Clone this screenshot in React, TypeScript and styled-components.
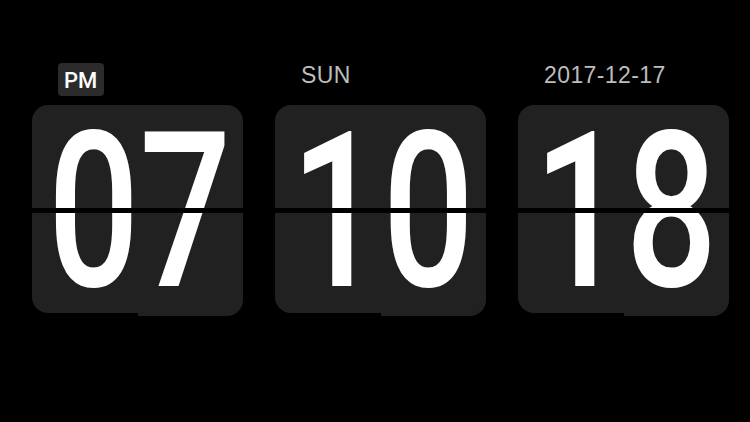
import styled, { createGlobalStyle } from 'styled-components';

const GlobalStyle = createGlobalStyle`
    html, body {
        margin: 0;
        padding: 0;
        background: #000;
    }
    body {
        font-family: "Liberation Sans", Arial, sans-serif;
    }
`;

const Screen = styled.div`
    width: 750px;
    height: 422px;
    background: #000;
    display: flex;
    flex-direction: column;
    padding: 63px 0 0 32px;
    box-sizing: border-box;
`;

const Row = styled.div`
    display: flex;
    gap: 32px;
`;

const Column = styled.div`
    width: 211px;
    display: flex;
    flex-direction: column;
    gap: 9px;
`;

const LabelRow = styled.div`
    height: 33px;
    display: flex;
    align-items: flex-start;
    padding-left: 26px;
`;

const Badge = styled.span`
    height: 33px;
    padding: 2px 7px 0 6px;
    display: flex;
    align-items: center;
    background: #2b2b2b;
    border-radius: 4px;
    color: #fff;
    font-family: Roboto, "Liberation Sans", sans-serif;
    font-size: 22px;
    font-weight: 500;
    line-height: 24px;
    box-sizing: border-box;
`;

const Label = styled.span`
    color: #bdbdbd;
    font-size: 23px;
    letter-spacing: 0.4px;
    line-height: 24px;
`;

const Card = styled.div`
    position: relative;
    height: 208px;

    /* split between the two flaps */
    &::before {
        content: '';
        position: absolute;
        left: 0;
        right: 0;
        top: 103px;
        height: 5px;
        background: #000;
        z-index: 2;
    }

    /* right half of the lower flap hangs a little lower */
    &::after {
        content: '';
        position: absolute;
        left: 50%;
        right: 0;
        bottom: -3px;
        height: 40px;
        background: #212121;
        border-radius: 0 0 16px 0;
        z-index: 0;
    }
`;

const Face = styled.div`
    position: relative;
    z-index: 1;
    height: 100%;
    background: #212121;
    border-radius: 16px;
    display: flex;
    align-items: center;
    justify-content: center;
`;

const Digits = styled.span`
    flex-shrink: 0;
    display: block;
    color: #fff;
    font-family: Roboto, "Liberation Sans", sans-serif;
    font-weight: 500;
    font-size: 218px;
    line-height: 180px;
    letter-spacing: 0px;
    white-space: nowrap;
    transform: scaleX(0.74) translate(2px, 3px);
`;

function FlipCard({ value }: { value: string }) {
    return (
        <Card>
            <Face>
                <Digits>{value}</Digits>
            </Face>
        </Card>
    );
}

export default function App() {
    return (
        <>
            <GlobalStyle />
            <Screen>
                <Row>
                    <Column>
                        <LabelRow>
                            <Badge>PM</Badge>
                        </LabelRow>
                        <FlipCard value="07" />
                    </Column>
                    <Column>
                        <LabelRow>
                            <Label>SUN</Label>
                        </LabelRow>
                        <FlipCard value="10" />
                    </Column>
                    <Column>
                        <LabelRow>
                            <Label>2017-12-17</Label>
                        </LabelRow>
                        <FlipCard value="18" />
                    </Column>
                </Row>
            </Screen>
        </>
    );
}
